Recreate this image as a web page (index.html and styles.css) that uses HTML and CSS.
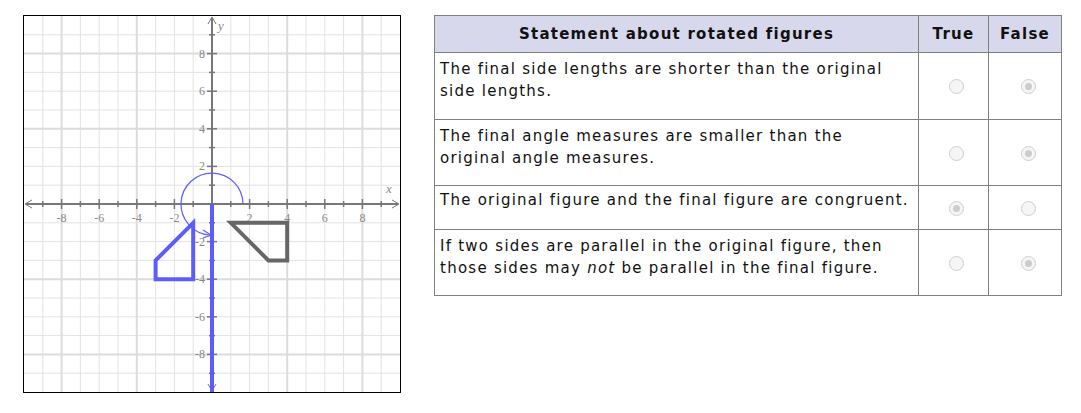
FILE: index.html
```html
<!DOCTYPE html>
<html>
<head>
<meta charset="utf-8">
<link rel="stylesheet" href="styles.css">
</head>
<body>
<div class="page">
  <div class="graph">
    <svg width="376" height="376" viewBox="0 0 376 376" xmlns="http://www.w3.org/2000/svg">
      <g stroke="#e3e3e3" stroke-width="1">
        <line x1="18.8" y1="0" x2="18.8" y2="376"/>
        <line x1="56.4" y1="0" x2="56.4" y2="376"/>
        <line x1="75.2" y1="0" x2="75.2" y2="376"/>
        <line x1="94" y1="0" x2="94" y2="376"/>
        <line x1="131.6" y1="0" x2="131.6" y2="376"/>
        <line x1="150.4" y1="0" x2="150.4" y2="376"/>
        <line x1="169.2" y1="0" x2="169.2" y2="376"/>
        <line x1="206.8" y1="0" x2="206.8" y2="376"/>
        <line x1="225.6" y1="0" x2="225.6" y2="376"/>
        <line x1="244.4" y1="0" x2="244.4" y2="376"/>
        <line x1="282" y1="0" x2="282" y2="376"/>
        <line x1="300.8" y1="0" x2="300.8" y2="376"/>
        <line x1="319.6" y1="0" x2="319.6" y2="376"/>
        <line x1="357.2" y1="0" x2="357.2" y2="376"/>
        <line y1="18.8" x1="0" y2="18.8" x2="376"/>
        <line y1="56.4" x1="0" y2="56.4" x2="376"/>
        <line y1="75.2" x1="0" y2="75.2" x2="376"/>
        <line y1="94" x1="0" y2="94" x2="376"/>
        <line y1="131.6" x1="0" y2="131.6" x2="376"/>
        <line y1="150.4" x1="0" y2="150.4" x2="376"/>
        <line y1="169.2" x1="0" y2="169.2" x2="376"/>
        <line y1="206.8" x1="0" y2="206.8" x2="376"/>
        <line y1="225.6" x1="0" y2="225.6" x2="376"/>
        <line y1="244.4" x1="0" y2="244.4" x2="376"/>
        <line y1="282" x1="0" y2="282" x2="376"/>
        <line y1="300.8" x1="0" y2="300.8" x2="376"/>
        <line y1="319.6" x1="0" y2="319.6" x2="376"/>
        <line y1="357.2" x1="0" y2="357.2" x2="376"/>
      </g>
      <g stroke="#dcdcdc" stroke-width="2">
        <line x1="37.6" y1="0" x2="37.6" y2="376"/>
        <line x1="112.8" y1="0" x2="112.8" y2="376"/>
        <line x1="263.2" y1="0" x2="263.2" y2="376"/>
        <line x1="338.4" y1="0" x2="338.4" y2="376"/>
        <line y1="37.6" x1="0" y2="37.6" x2="376"/>
        <line y1="112.8" x1="0" y2="112.8" x2="376"/>
        <line y1="263.2" x1="0" y2="263.2" x2="376"/>
        <line y1="338.4" x1="0" y2="338.4" x2="376"/>
      </g>
      <g stroke="#777" stroke-width="2" fill="none">
        <line x1="2" y1="188" x2="374" y2="188"/>
        <line x1="188" y1="2" x2="188" y2="374"/>
      </g>
      <g stroke="#777" stroke-width="1" fill="none">
        <polyline points="368,184 375,188 368,192"/>
        <polyline points="8,184 1,188 8,192"/>
        <polyline points="184,8 188,1 192,8"/>
        <polyline points="184,368 188,375 192,368"/>
      </g>
      <g stroke="#777" stroke-width="1.5">
        <line x1="18.8" y1="185" x2="18.8" y2="191"/>
        <line x1="56.4" y1="185" x2="56.4" y2="191"/>
        <line x1="94" y1="185" x2="94" y2="191"/>
        <line x1="131.6" y1="185" x2="131.6" y2="191"/>
        <line x1="169.2" y1="185" x2="169.2" y2="191"/>
        <line x1="206.8" y1="185" x2="206.8" y2="191"/>
        <line x1="244.4" y1="185" x2="244.4" y2="191"/>
        <line x1="282" y1="185" x2="282" y2="191"/>
        <line x1="319.6" y1="185" x2="319.6" y2="191"/>
        <line x1="357.2" y1="185" x2="357.2" y2="191"/>
        <line x1="37.6" y1="183" x2="37.6" y2="193"/>
        <line x1="75.2" y1="183" x2="75.2" y2="193"/>
        <line x1="112.8" y1="183" x2="112.8" y2="193"/>
        <line x1="150.4" y1="183" x2="150.4" y2="193"/>
        <line x1="225.6" y1="183" x2="225.6" y2="193"/>
        <line x1="263.2" y1="183" x2="263.2" y2="193"/>
        <line x1="300.8" y1="183" x2="300.8" y2="193"/>
        <line x1="338.4" y1="183" x2="338.4" y2="193"/>
        <line y1="18.8" x1="185" y2="18.8" x2="191"/>
        <line y1="56.4" x1="185" y2="56.4" x2="191"/>
        <line y1="94" x1="185" y2="94" x2="191"/>
        <line y1="131.6" x1="185" y2="131.6" x2="191"/>
        <line y1="169.2" x1="185" y2="169.2" x2="191"/>
        <line y1="206.8" x1="185" y2="206.8" x2="191"/>
        <line y1="244.4" x1="185" y2="244.4" x2="191"/>
        <line y1="282" x1="185" y2="282" x2="191"/>
        <line y1="319.6" x1="185" y2="319.6" x2="191"/>
        <line y1="357.2" x1="185" y2="357.2" x2="191"/>
        <line y1="37.6" x1="183" y2="37.6" x2="193"/>
        <line y1="75.2" x1="183" y2="75.2" x2="193"/>
        <line y1="112.8" x1="183" y2="112.8" x2="193"/>
        <line y1="150.4" x1="183" y2="150.4" x2="193"/>
        <line y1="225.6" x1="183" y2="225.6" x2="193"/>
        <line y1="263.2" x1="183" y2="263.2" x2="193"/>
        <line y1="300.8" x1="183" y2="300.8" x2="193"/>
        <line y1="338.4" x1="183" y2="338.4" x2="193"/>
      </g>
      <g class="lbl" text-anchor="middle">
        <text x="37.6" y="206">-8</text>
        <text x="75.2" y="206">-6</text>
        <text x="112.8" y="206">-4</text>
        <text x="150.4" y="206">-2</text>
        <text x="225.6" y="206">2</text>
        <text x="263.2" y="206">4</text>
        <text x="300.8" y="206">6</text>
        <text x="338.4" y="206">8</text>
      </g>
      <g class="lbl" text-anchor="end">
        <text x="181" y="41.6">8</text>
        <text x="181" y="79.2">6</text>
        <text x="181" y="116.8">4</text>
        <text x="181" y="154.4">2</text>
        <text x="181" y="229.6">-2</text>
        <text x="181" y="267.2">-4</text>
        <text x="181" y="304.8">-6</text>
        <text x="181" y="342.4">-8</text>
      </g>
      <text class="axis-name" x="194" y="14">y</text>
      <text class="axis-name" x="362" y="177">x</text>
      <polygon points="169.2,206.8 131.6,244.4 131.6,263.2 169.2,263.2" fill="none" stroke="#5c5cff" stroke-width="4" stroke-linejoin="miter"/>
      <polygon points="206.8,206.8 263.2,206.8 263.2,244.4 244.4,244.4" fill="none" stroke="#666" stroke-width="4" stroke-linejoin="miter"/>
      <line x1="188" y1="188" x2="188" y2="376" stroke="#5c5cff" stroke-width="4"/>
      <path d="M219,188 A31,31 0 1 0 186,219" fill="none" stroke="#5c5cff" stroke-width="1.2"/>
      <polyline points="179,214 187,219 179,222" fill="none" stroke="#5c5cff" stroke-width="1.2"/>
    </svg>
  </div>
  <table class="tbl">
    <thead>
      <tr>
        <th class="c-stmt">Statement about rotated figures</th>
        <th class="c-true">True</th>
        <th class="c-false">False</th>
      </tr>
    </thead>
    <tbody>
      <tr class="r2">
        <td class="stmt">The final side lengths are shorter than the original side lengths.</td>
        <td class="opt"><span class="radio"></span></td>
        <td class="opt"><span class="radio on"></span></td>
      </tr>
      <tr>
        <td class="stmt">The final angle measures are smaller than the original angle measures.</td>
        <td class="opt"><span class="radio"></span></td>
        <td class="opt"><span class="radio on"></span></td>
      </tr>
      <tr class="one">
        <td class="stmt">The original figure and the final figure are congruent.</td>
        <td class="opt"><span class="radio on"></span></td>
        <td class="opt"><span class="radio"></span></td>
      </tr>
      <tr>
        <td class="stmt">If two sides are parallel in the original figure, then those sides may <em>not</em> be parallel in the final figure.</td>
        <td class="opt"><span class="radio"></span></td>
        <td class="opt"><span class="radio on"></span></td>
      </tr>
    </tbody>
  </table>
</div>
</body>
</html>
```
FILE: styles.css
```css
html, body {
  margin: 0;
  padding: 0;
  background: #fff;
}
.page {
  display: flex;
  align-items: flex-start;
  gap: 33px;
  padding: 15px 0 0 23px;
}
.graph {
  width: 376px;
  height: 376px;
  border: 1px solid #000;
  flex: none;
}
.graph svg {
  display: block;
}
.lbl text {
  font-family: "Liberation Serif", serif;
  font-size: 12px;
  fill: #888;
}
.axis-name {
  font-family: "Liberation Serif", serif;
  font-style: italic;
  font-size: 13px;
  fill: #888;
}
.tbl {
  border-collapse: collapse;
  border: 1px solid #444;
  font-family: "DejaVu Sans", Verdana, sans-serif;
  font-size: 15px;
  letter-spacing: 1.25px;
  color: #111;
  table-layout: fixed;
  width: 626px;
}
.tbl th {
  background: #d8d8ec;
  font-weight: bold;
  border: 1px solid #808080;
  height: 36px;
  padding: 0;
  text-align: center;
}
.tbl td {
  border: 1px solid #808080;
}
.c-stmt { width: 483px; }
.c-true { width: 69px; }
.c-false { width: 72px; }
.stmt {
  padding: 5px 4px 16px 5px;
  line-height: 22px;
  vertical-align: top;
}
.r2 .stmt {
  padding-bottom: 17px;
}
.one .stmt {
  padding-top: 3px;
  padding-bottom: 18px;
}
.opt {
  text-align: center;
  vertical-align: middle;
  padding: 0 0 0 6px;
}
.radio {
  display: inline-block;
  width: 13px;
  height: 13px;
  border: 1px solid #cfcfcf;
  border-radius: 50%;
  background: #f5f5f5;
  position: relative;
  vertical-align: middle;
}
.radio.on::after {
  content: "";
  position: absolute;
  left: 3px;
  top: 3px;
  width: 7px;
  height: 7px;
  border-radius: 50%;
  background: #cccccc;
}
```
